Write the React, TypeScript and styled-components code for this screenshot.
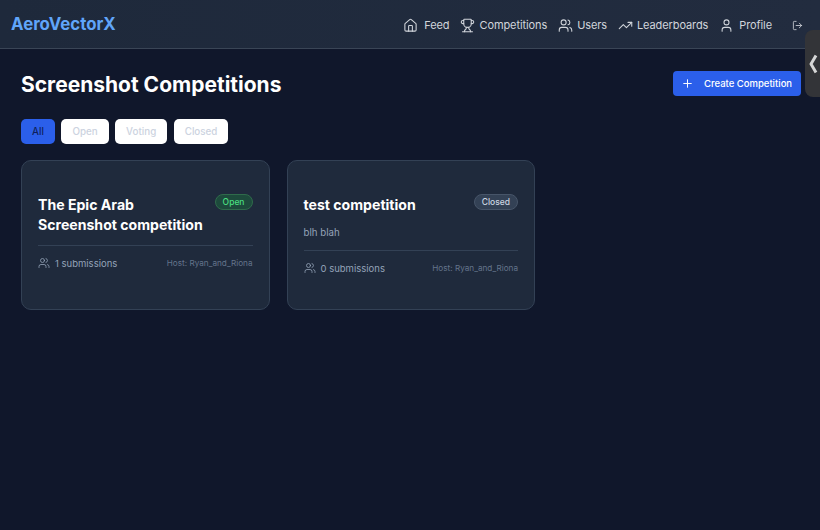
import { createGlobalStyle, styled } from "styled-components";
import { House, LogOut, Plus, TrendingUp, Trophy, User, Users } from "lucide-react";

const GlobalStyle = createGlobalStyle`
  html, body {
    margin: 0;
    background: #10172b;
  }
  * {
    box-sizing: border-box;
  }
  body {
    font-family: "Inter", "Liberation Sans", sans-serif;
    overflow: hidden;
  }
`;

const navLinks = [
  { label: "Feed", icon: House, gap: 6 },
  { label: "Competitions", icon: Trophy, gap: 4 },
  { label: "Users", icon: Users, gap: 4 },
  { label: "Leaderboards", icon: TrendingUp, gap: 4 },
  { label: "Profile", icon: User, gap: 5 },
];

const filters = ["All", "Open", "Voting", "Closed"];

const competitions = [
  {
    title: "The Epic Arab Screenshot competition",
    status: "Open",
    submissions: 1,
    host: "Ryan_and_Riona",
  },
  {
    title: "test competition",
    description: "blh blah",
    status: "Closed",
    submissions: 0,
    host: "Ryan_and_Riona",
  },
];

function App() {
  return (
    <Page>
      <GlobalStyle />
      <Navbar>
        <Logo>AeroVectorX</Logo>
        <NavLinks>
          {navLinks.map((link) => (
            <NavLink key={link.label} $gap={link.gap}>
              <link.icon size={15} strokeWidth={1.7} />
              {link.label}
            </NavLink>
          ))}
          <LogoutBtn>
            <LogOut size={11} strokeWidth={1.8} />
          </LogoutBtn>
        </NavLinks>
      </Navbar>

      <SideTab>
        <svg width="9" height="20" viewBox="0 0 9 20">
          <path d="M7 1.5 2 10l5 8.5" fill="none" stroke="#d6d6d6" strokeWidth="3" strokeLinejoin="round" />
        </svg>
      </SideTab>

      <Main>
        <Header>
          <Title>Screenshot Competitions</Title>
          <CreateBtn>
            <Plus size={13} strokeWidth={1.8} />
            Create Competition
          </CreateBtn>
        </Header>

        <Filters>
          {filters.map((filter) => (
            <FilterBtn key={filter} $active={filter === "All"}>
              {filter}
            </FilterBtn>
          ))}
        </Filters>

        <CardGrid>
          {competitions.map((c) => (
            <Card key={c.title}>
              <CardTop>
                <CardTitle>{c.title}</CardTitle>
                <Badge $open={c.status === "Open"}>{c.status}</Badge>
              </CardTop>
              {c.description && <Description>{c.description}</Description>}
              <CardFooter>
                <Submissions>
                  <Users size={12} strokeWidth={1.6} />
                  {c.submissions} submissions
                </Submissions>
                <Host>Host: {c.host}</Host>
              </CardFooter>
            </Card>
          ))}
        </CardGrid>
      </Main>
    </Page>
  );
}

const Page = styled.div`
  position: relative;
  width: 820px;
  height: 530px;
  background: #10172b;
  overflow: hidden;
`;

const Navbar = styled.nav`
  display: flex;
  align-items: center;
  justify-content: space-between;
  height: 49px;
  padding: 0 17px 0 11px;
  background: linear-gradient(90deg, #1e293b, #222c3f);
  border-bottom: 1px solid #3a4556;
`;

const Logo = styled.div`
  font-size: 16.8px;
  font-weight: 700;
  color: #60a5fa;
`;

const NavLinks = styled.div`
  display: flex;
  align-items: center;
  padding-top: 2px;
`;

const NavLink = styled.a<{ $gap: number }>`
  display: flex;
  align-items: center;
  gap: ${(p) => p.$gap}px;
  margin-right: 11px;
  font-size: 11px;
  letter-spacing: -0.1px;
  color: #d1d5db;
`;

const LogoutBtn = styled.span`
  display: flex;
  margin-left: 9px;
  color: #d1d5db;
`;

const SideTab = styled.div`
  position: absolute;
  top: 30px;
  right: -1px;
  display: flex;
  align-items: center;
  justify-content: center;
  width: 16px;
  height: 67px;
  background: #333438;
  border-radius: 8px 0 0 8px;
`;

const Main = styled.main`
  padding: 22px 19px 0 21px;
`;

const Header = styled.header`
  display: flex;
  align-items: center;
  justify-content: space-between;
  height: 25px;
`;

const Title = styled.h1`
  margin: 0;
  padding-top: 2px;
  font-size: 21px;
  font-weight: 700;
  color: #ffffff;
`;

const CreateBtn = styled.button`
  display: flex;
  align-items: center;
  gap: 10px;
  width: 128px;
  height: 25px;
  padding: 0 0 0 8px;
  border: 0;
  border-radius: 4px;
  background: #2b5fea;
  color: #ffffff;
  font-family: inherit;
  font-size: 9.5px;
  font-weight: 500;
`;

const Filters = styled.div`
  display: flex;
  gap: 6.5px;
  margin-top: 23px;
`;

const FilterBtn = styled.button<{ $active: boolean }>`
  height: 25px;
  padding: 0 11px;
  border: 0;
  border-radius: 5px;
  background: ${(p) => (p.$active ? "#2b5fea" : "#ffffff")};
  color: ${(p) => (p.$active ? "#0f1f5a" : "#ccd3e0")};
  font-family: inherit;
  font-size: 9.8px;
  font-weight: 500;
`;

const CardGrid = styled.div`
  display: grid;
  grid-template-columns: 248.5px 248.5px;
  gap: 17px;
  margin-top: 16px;
`;

const Card = styled.article`
  display: flex;
  flex-direction: column;
  height: 150px;
  padding: 34px 16px 0;
  background: #1f2a3c;
  border: 1px solid #334155;
  border-radius: 10px;
`;

const CardTop = styled.div`
  display: flex;
  align-items: flex-start;
  justify-content: space-between;
`;

const CardTitle = styled.h2`
  width: 170px;
  margin: 0;
  font-size: 14.1px;
  font-weight: 700;
  line-height: 20px;
  color: #ffffff;
`;

const Badge = styled.span<{ $open: boolean }>`
  margin-top: -1px;
  padding: 1px 7px;
  height: 16px;
  border-radius: 8px;
  border: 1px solid ${(p) => (p.$open ? "#2f6b4b" : "#475569")};
  background: ${(p) => (p.$open ? "#1d4a3c" : "#334155")};
  color: ${(p) => (p.$open ? "#4ade80" : "#cbd5e1")};
  font-size: 8.5px;
  font-weight: 500;
  line-height: 12px;
`;

const Description = styled.p`
  margin: 10px 0 0;
  font-size: 9.7px;
  line-height: 15px;
  color: #94a3b8;
`;

const CardFooter = styled.div`
  display: flex;
  align-items: center;
  justify-content: space-between;
  margin-top: 10px;
  padding-top: 11px;
  border-top: 1px solid #334155;
`;

const Submissions = styled.div`
  display: flex;
  align-items: center;
  gap: 5px;
  font-size: 9.5px;
  color: #94a3b8;
`;

const Host = styled.div`
  font-size: 8.2px;
  color: #64748b;
`;

export default App;
